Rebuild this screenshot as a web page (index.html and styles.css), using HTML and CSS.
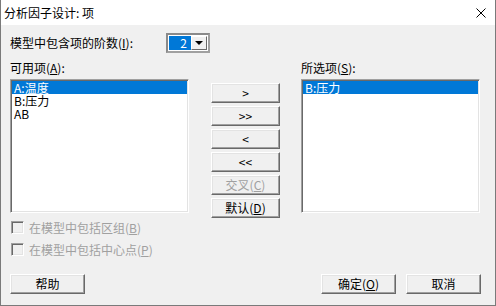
FILE: index.html
```html
<!DOCTYPE html>
<html lang="zh-CN">
<head>
  <meta charset="UTF-8">
  <title>分析因子设计: 项</title>
  <link rel="stylesheet" href="styles.css">
</head>
<body>

  <div class="window">
    <div class="titlebar">
      <span class="title">分析因子设计: 项</span>
      <svg class="close" width="10" height="10" viewBox="0 0 10 10">
        <path d="M0.5 0.5 L9.5 9.5 M9.5 0.5 L0.5 9.5" stroke="#000" stroke-width="1" fill="none"/>
      </svg>
    </div>

    <div class="content">
      <div class="order-row">
        <span class="order-label">模型中包含项的阶数(<u>I</u>):</span>
        <div class="combo">
          <span class="combo-value">2</span>
          <span class="combo-btn"><span class="arrow"></span></span>
        </div>
      </div>

      <div class="lists">
        <div class="list-col">
          <div class="label">可用项(<u>A</u>):</div>
          <div class="listbox">
            <div class="item selected">A:温度</div>
            <div class="item">B:压力</div>
            <div class="item">AB</div>
          </div>
        </div>

        <div class="move-col">
          <button class="btn">&gt;</button>
          <button class="btn">&gt;&gt;</button>
          <button class="btn">&lt;</button>
          <button class="btn">&lt;&lt;</button>
          <button class="btn disabled">交叉(<u>C</u>)</button>
          <button class="btn">默认(<u>D</u>)</button>
        </div>

        <div class="list-col">
          <div class="label">所选项(<u>S</u>):</div>
          <div class="listbox">
            <div class="item selected">B:压力</div>
          </div>
        </div>
      </div>

      <div class="checks">
        <label class="check"><span class="box"></span>在模型中包括区组(<u>B</u>)</label>
        <label class="check"><span class="box"></span>在模型中包括中心点(<u>P</u>)</label>
      </div>

      <div class="footer">
        <button class="btn wide">帮助</button>
        <div class="footer-right">
          <button class="btn wide">确定(<u>O</u>)</button>
          <button class="btn wide">取消</button>
        </div>
      </div>
    </div>
  </div>

</body>
</html>
```

FILE: styles.css
```css
* {
  box-sizing: border-box;
}
body {
  margin: 0;
  font-family: "Noto Sans CJK SC", "Liberation Sans", sans-serif;
  font-size: 12px;
  color: #000;
  -webkit-user-select: none;
  user-select: none;
}
u {
  text-decoration: underline;
  text-underline-offset: 1px;
}

.window {
  width: 496px;
  height: 306px;
  border: 1px solid #7a7a7a;
  border-top: none;
  background: #f0f0f0;
  display: flex;
  flex-direction: column;
}

/* title bar */
.titlebar {
  height: 25px;
  background: #fff;
  display: flex;
  align-items: center;
  justify-content: space-between;
  padding: 0 9px 0 3px;
}
.titlebar .title {
  line-height: 16px;
}
.titlebar .close {
  display: block;
  margin-top: 1px;
}

.content {
  flex: 1;
  padding: 8px 0 0 9px;
}

/* order row */
.order-row {
  display: flex;
  align-items: center;
  height: 20px;
}
.order-label {
  width: 156px;
  line-height: 16px;
}
.combo {
  width: 44px;
  height: 20px;
  display: flex;
  border: 2px solid #a0a0a0;
  border-top-color: #8a8a8a;
  border-left-color: #8a8a8a;
  background: #fff;
  padding: 1px;
}
.combo-value {
  flex: 1;
  background: #0078d7;
  color: #fff;
  text-align: right;
  padding-right: 4px;
  line-height: 14px;
}
.combo-btn {
  width: 16px;
  background: #f0f0f0;
  border: 1px solid;
  border-color: #fff #696969 #696969 #fff;
  display: flex;
  align-items: center;
  justify-content: center;
}
.arrow {
  width: 0;
  height: 0;
  border-left: 4px solid transparent;
  border-right: 4px solid transparent;
  border-top: 4px solid #000;
}

/* lists */
.lists {
  display: flex;
  align-items: flex-start;
  margin-top: 7px;
  height: 158px;
}
.list-col {
  width: 179px;
}
.label {
  line-height: 16px;
  margin-bottom: 3px;
}
.listbox {
  height: 134px;
  background: #fff;
  border: 1px solid;
  border-color: #a0a0a0 #fff #fff #a0a0a0;
  box-shadow: inset 1px 1px #696969, inset -1px -1px #e3e3e3;
  padding: 1px 1px 0 1px;
}
.item {
  line-height: 13px;
  height: 13px;
  padding-left: 2px;
  white-space: nowrap;
}
.item.selected {
  background: #0078d7;
  color: #fff;
}

.move-col {
  width: 69px;
  margin: 0 21px 0 22px;
  padding-top: 23px;
  display: flex;
  flex-direction: column;
  gap: 3px;
}

/* buttons */
.btn {
  font: inherit;
  color: #000;
  height: 20px;
  padding: 0;
  background: #f0f0f0;
  border: 1px solid;
  border-color: #fff #696969 #696969 #fff;
  box-shadow: inset -1px -1px #a0a0a0, inset 1px 1px #e3e3e3;
  line-height: 16px;
}
.btn.disabled {
  color: #a0a0a0;
}
.btn.wide {
  width: 75px;
}

/* checkboxes */
.checks {
  display: flex;
  flex-direction: column;
  gap: 4px;
}
.check {
  height: 18px;
  display: flex;
  align-items: center;
  color: #a0a0a0;
}
.check .box {
  width: 13px;
  height: 13px;
  margin: 0 5px 0 1px;
  background: #f0f0f0;
  border: 1px solid;
  border-color: #a0a0a0 #fff #fff #a0a0a0;
  box-shadow: inset 1px 1px #696969, inset -1px -1px #e3e3e3;
}

/* footer */
.footer {
  margin-top: 16px;
  display: flex;
  justify-content: space-between;
  padding-right: 14px;
}
.footer-right {
  display: flex;
  gap: 10px;
}
```
